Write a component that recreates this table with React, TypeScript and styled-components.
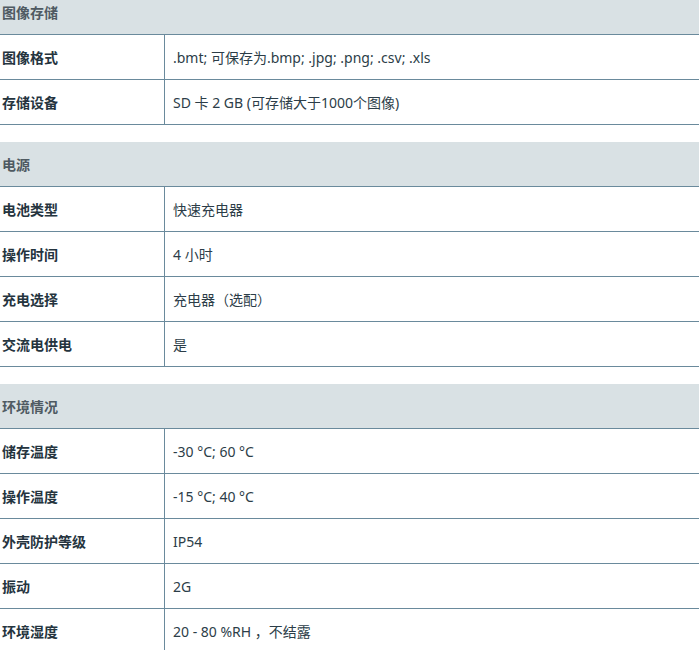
import React from "react";
import styled, { createGlobalStyle } from "styled-components";

const Global = createGlobalStyle`
  html, body { margin: 0; padding: 0; background: #ffffff; }
  body {
    font-family: "Noto Sans", "Noto Sans CJK SC", sans-serif;
    font-size: 14px;
    color: #333333;
  }
`;

const Page = styled.div`
  width: 699px;
  margin-top: -10px;
  display: flex;
  flex-direction: column;
  gap: 17px;
`;

const Table = styled.section`
  display: grid;
  grid-template-columns: 165px 1fr;
`;

const Header = styled.div`
  grid-column: 1 / -1;
  height: 44px;
  display: flex;
  align-items: center;
  padding-left: 2px;
  background: #d9e1e4;
  border-bottom: 1px solid #6a8a9c;
  font-weight: 700;
  color: #4f5a62;
`;

const Cell = styled.div<{ $label?: boolean }>`
  height: 44px;
  display: flex;
  align-items: center;
  border-bottom: 1px solid #6a8a9c;
  padding-left: ${(p) => (p.$label ? "2px" : "8px")};
  border-right: ${(p) => (p.$label ? "1px solid #6a8a9c" : "none")};
  font-weight: ${(p) => (p.$label ? 700 : 400)};
  color: ${(p) => (p.$label ? "#25343e" : "#2c3d48")};
  white-space: nowrap;
`;

type Section = { title: string; rows: [string, string][] };

const sections: Section[] = [
  {
    title: "图像存储",
    rows: [
      ["图像格式", ".bmt; 可保存为.bmp; .jpg; .png; .csv; .xls"],
      ["存储设备", "SD 卡 2 GB (可存储大于1000个图像)"],
    ],
  },
  {
    title: "电源",
    rows: [
      ["电池类型", "快速充电器"],
      ["操作时间", "4 小时"],
      ["充电选择", "充电器（选配）"],
      ["交流电供电", "是"],
    ],
  },
  {
    title: "环境情况",
    rows: [
      ["储存温度", "-30 °C; 60 °C"],
      ["操作温度", "-15 °C; 40 °C"],
      ["外壳防护等级", "IP54"],
      ["振动", "2G"],
      ["环境湿度", "20 - 80 %RH ，不结露"],
    ],
  },
];

export default function App() {
  return (
    <>
      <Global />
      <Page>
        {sections.map((s) => (
          <Table key={s.title}>
            <Header>{s.title}</Header>
            {s.rows.map(([k, v]) => (
              <React.Fragment key={k}>
                <Cell $label>{k}</Cell>
                <Cell>{v}</Cell>
              </React.Fragment>
            ))}
          </Table>
        ))}
      </Page>
    </>
  );
}
